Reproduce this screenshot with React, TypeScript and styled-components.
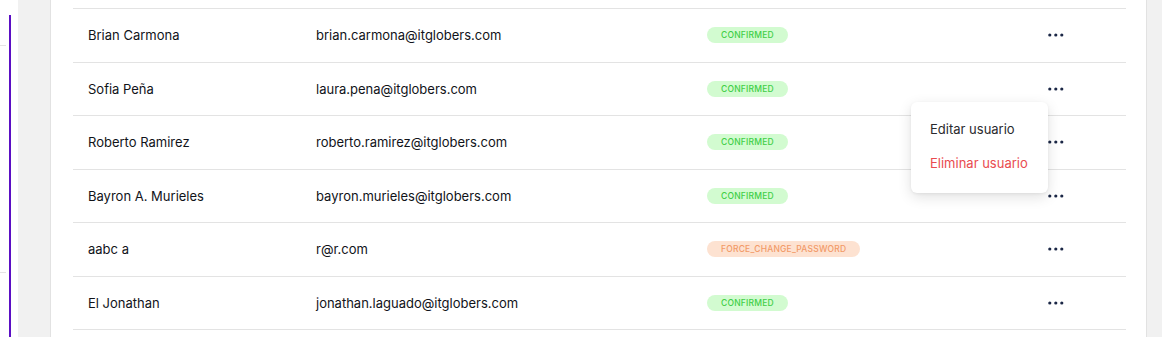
import React from "react";
import styled, { createGlobalStyle } from "styled-components";

const GlobalStyle = createGlobalStyle`
  html, body { margin: 0; padding: 0; background: #ffffff; }
  body { font-family: "Inter", "Noto Sans", sans-serif; overflow: hidden; }
  * { box-sizing: border-box; }
`;

const Page = styled.div`
  display: flex;
  width: 1162px;
  height: 337px;
  overflow: hidden;
`;

const Sidebar = styled.aside`
  display: flex;
  width: 18px;
  flex-shrink: 0;
  background: #ffffff;
`;

const SideList = styled.div`
  display: flex;
  flex-direction: column;
  width: 6px;
  padding-top: 45px;
`;

const SideDivider = styled.div<{ $gap?: number }>`
  height: 1px;
  background: #e4e4e4;
  margin-top: ${(p) => p.$gap ?? 0}px;
`;

const ActiveBar = styled.div`
  width: 2px;
  margin-left: 3px;
  margin-top: 15px;
  background: #5b0fc4;
`;

const Main = styled.main`
  flex: 1;
  display: flex;
  background: #f1f1f1;
  padding-left: 32px;
  padding-right: 15px;
`;

const Card = styled.section`
  flex: 1;
  background: #ffffff;
  border-left: 1px solid #e2e2e2;
  border-right: 1px solid #e2e2e2;
  padding: 8px 20px 0 22px;
`;

const Table = styled.div`
  display: flex;
  flex-direction: column;
  border-top: 1px solid #e3e3e3;
`;

const Row = styled.div`
  display: grid;
  grid-template-columns: 228px 391px 341px 1fr;
  align-items: center;
  height: 53.5px;
  padding-left: 15px;
  border-bottom: 1px solid #e3e3e3;
`;

const Cell = styled.div`
  font-size: 13px;
  font-weight: 400;
  color: #111319;
  white-space: nowrap;
`;

const StatusCell = styled.div`
  display: flex;
  align-items: center;
`;

const Badge = styled.span<{ $tone: "green" | "orange" }>`
  display: inline-flex;
  align-items: center;
  height: 16px;
  padding: 0 14px;
  border-radius: 8px;
  font-size: 8.5px;
  font-weight: 500;
  letter-spacing: 0.2px;
  background: ${(p) => (p.$tone === "green" ? "#d2fbd0" : "#fde2d1")};
  color: ${(p) => (p.$tone === "green" ? "#3fcf47" : "#f29a68")};
`;

const ActionCell = styled.div`
  position: relative;
  display: flex;
  align-items: center;
  height: 100%;
`;

const DotsButton = styled.button`
  display: flex;
  align-items: center;
  padding: 0;
  border: 0;
  background: transparent;
  cursor: pointer;
`;

const Menu = styled.div`
  position: absolute;
  top: 39px;
  right: 100%;
  width: 137px;
  height: 91px;
  padding: 0 0 1px 19px;
  display: flex;
  flex-direction: column;
  justify-content: center;
  gap: 15px;
  background: #ffffff;
  border-radius: 6px;
  box-shadow: 0 4px 14px rgba(0, 0, 0, 0.12), 0 1px 3px rgba(0, 0, 0, 0.06);
  z-index: 5;
`;

const MenuItem = styled.div<{ $danger?: boolean }>`
  font-size: 13px;
  font-weight: 400;
  line-height: 19px;
  color: ${(p) => (p.$danger ? "#e94b4f" : "#2a2a2e")};
  white-space: nowrap;
`;

const Dots = () => (
  <svg width="17" height="4" viewBox="0 0 17 4">
    <circle cx="1.8" cy="2" r="1.6" fill="#1b2746" />
    <circle cx="7.8" cy="2" r="1.6" fill="#1b2746" />
    <circle cx="13.8" cy="2" r="1.6" fill="#1b2746" />
  </svg>
);

type User = { name: string; email: string; status: string };

const users: User[] = [
  { name: "Brian Carmona", email: "brian.carmona@itglobers.com", status: "CONFIRMED" },
  { name: "Sofia Peña", email: "laura.pena@itglobers.com", status: "CONFIRMED" },
  { name: "Roberto Ramirez", email: "roberto.ramirez@itglobers.com", status: "CONFIRMED" },
  { name: "Bayron A. Murieles", email: "bayron.murieles@itglobers.com", status: "CONFIRMED" },
  { name: "aabc a", email: "r@r.com", status: "FORCE_CHANGE_PASSWORD" },
  { name: "El Jonathan", email: "jonathan.laguado@itglobers.com", status: "CONFIRMED" },
];

export default function App() {
  return (
    <>
      <GlobalStyle />
      <Page>
        <Sidebar>
          <SideList>
            <SideDivider />
            <SideDivider $gap={226} />
          </SideList>
          <ActiveBar />
        </Sidebar>
        <Main>
          <Card>
            <Table>
              {users.map((u, i) => (
                <Row key={u.email}>
                  <Cell>{u.name}</Cell>
                  <Cell>{u.email}</Cell>
                  <StatusCell>
                    <Badge $tone={u.status === "CONFIRMED" ? "green" : "orange"}>{u.status}</Badge>
                  </StatusCell>
                  <ActionCell>
                    <DotsButton aria-label="Acciones">
                      <Dots />
                    </DotsButton>
                    {i === 1 && (
                      <Menu>
                        <MenuItem>Editar usuario</MenuItem>
                        <MenuItem $danger>Eliminar usuario</MenuItem>
                      </Menu>
                    )}
                  </ActionCell>
                </Row>
              ))}
            </Table>
          </Card>
        </Main>
      </Page>
    </>
  );
}
